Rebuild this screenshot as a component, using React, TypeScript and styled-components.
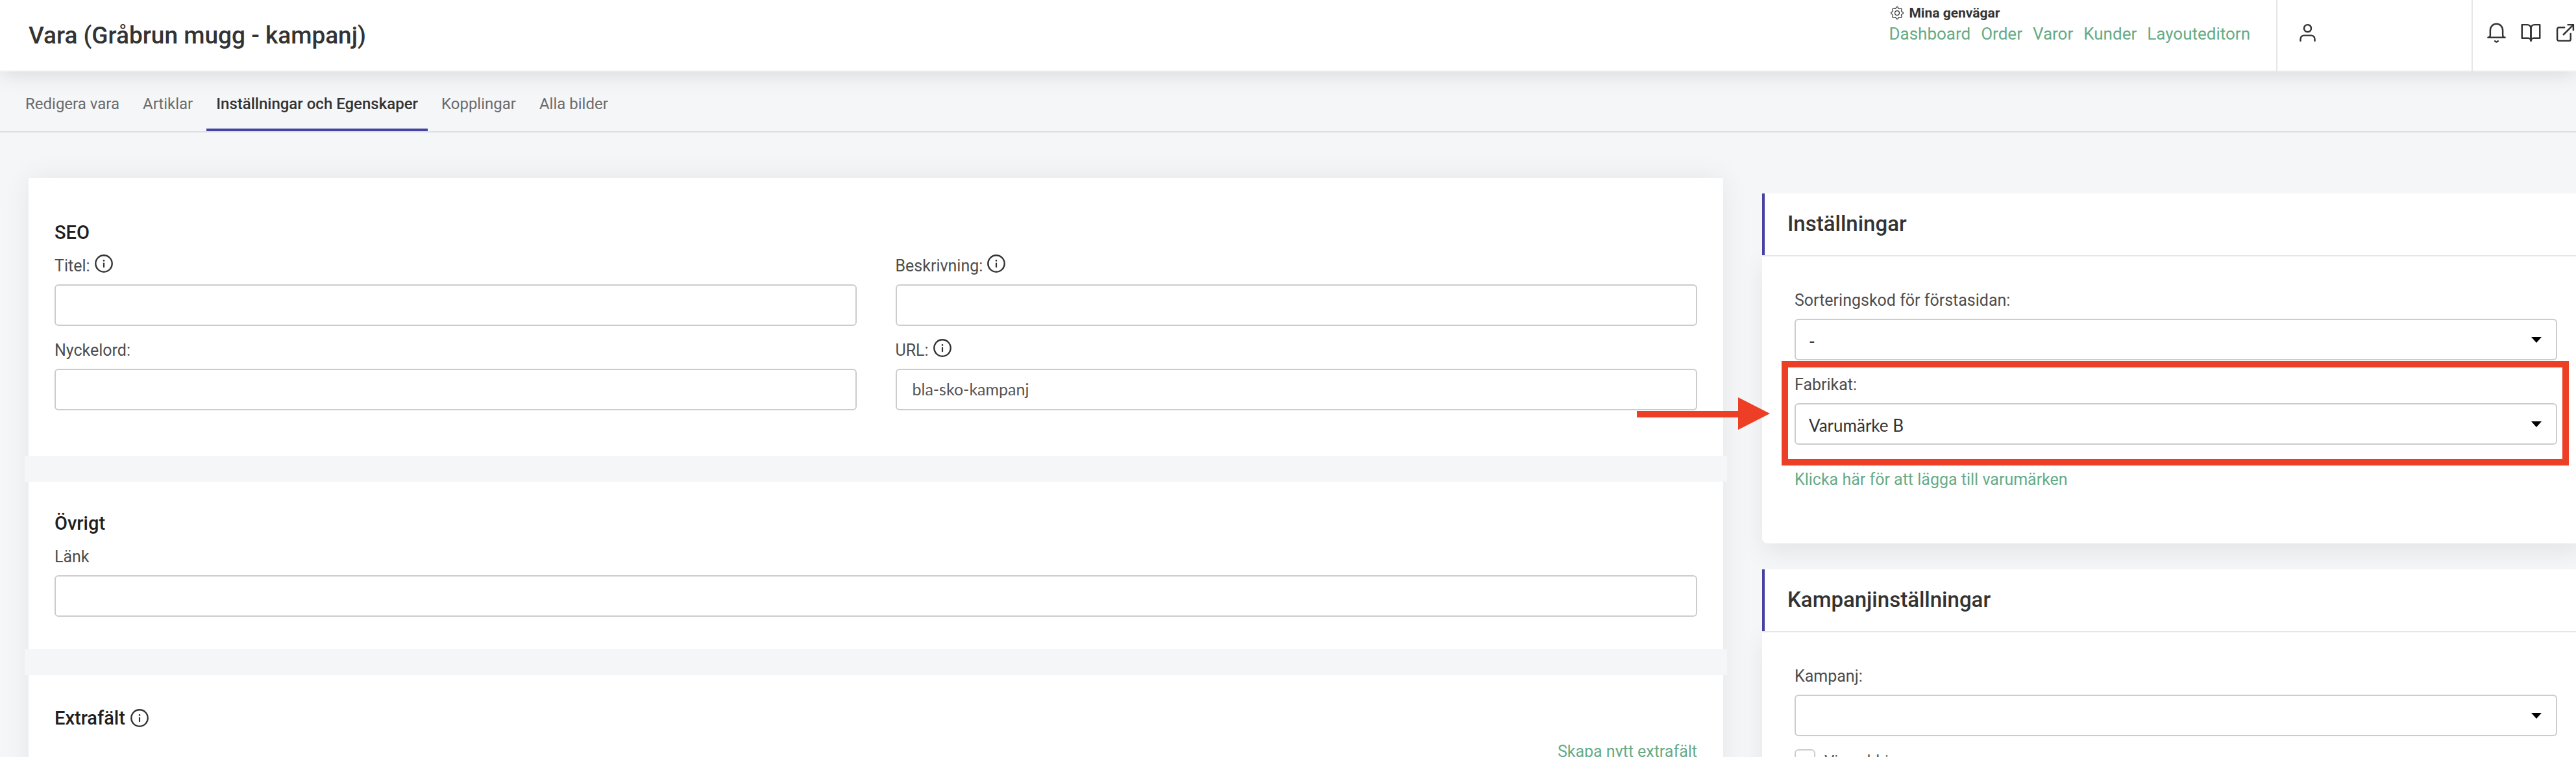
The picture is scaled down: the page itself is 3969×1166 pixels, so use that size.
import React from "react";
import styled, { createGlobalStyle } from "styled-components";
import { BsGear } from "react-icons/bs";

const ink = "#333333";
const green = "#65ab86";
const indigo = "#4643a0";
const canvas = "#f5f6f8";
const marker = "#ec3f26";

const GlobalStyle = createGlobalStyle`
  *, *::before, *::after { box-sizing: border-box; }
  body {
    margin: 0;
    background: ${canvas};
    color: ${ink};
    font-family: Roboto, "Liberation Sans", sans-serif;
    font-size: 25px;
    line-height: 36px;
  }
  html, body { overflow: hidden; }
  a { text-decoration: none; }
`;

const Page = styled.div`
  display: flex;
  flex-direction: column;
  height: 100vh;
  overflow: hidden;
`;

const TopBar = styled.header`
  position: relative;
  z-index: 1;
  flex: none;
  display: flex;
  align-items: stretch;
  height: 110px;
  background: #ffffff;
  border-bottom: 2px solid #f8f8f8;
  box-shadow: 0 4px 30px rgba(0, 0, 0, 0.12);
`;

const PageTitle = styled.h1`
  flex: 1;
  margin: 0;
  padding: 34px 44px;
  font-size: 37px;
  line-height: 42px;
  font-weight: 500;
`;

const Shortcuts = styled.nav`
  padding: 6px 40px 0 0;
`;

const ShortcutsTitle = styled.div`
  display: flex;
  align-items: center;
  gap: 8px;
  padding-left: 3px;
  font-size: 21px;
  line-height: 28px;
  font-weight: 700;
`;

const ShortcutList = styled.div`
  display: flex;
  gap: 16px;
`;

const GreenLink = styled.a<{ $size?: number }>`
  color: ${green};
  font-size: ${(p) => p.$size ?? 25}px;
`;

const UserArea = styled.div`
  display: flex;
  align-items: flex-start;
  width: 301px;
  margin-bottom: -2px;
  padding: 34px 30px;
  border-left: 2px solid #e6e6e6;
`;

const ToolArea = styled.div`
  display: flex;
  align-items: flex-start;
  gap: 20px;
  margin-bottom: -2px;
  padding: 34px 0 0 20px;
  border-left: 2px solid #e6e6e6;
`;

const IconButton = styled.button`
  display: flex;
  padding: 0;
  border: 0;
  background: none;
  color: ${ink};
`;

const Tabs = styled.nav`
  flex: none;
  display: flex;
  gap: 6px;
  height: 94px;
  padding-left: 24px;
  border-bottom: 2px solid #dcdee1;
`;

const Tab = styled.a<{ $active?: boolean }>`
  padding: 32px 15px 0;
  font-size: 24px;
  color: ${(p) => (p.$active ? ink : "#6b6b6b")};
  font-weight: ${(p) => (p.$active ? 500 : 400)};
  border-bottom: 4px solid ${(p) => (p.$active ? indigo : "transparent")};
`;

const Columns = styled.main`
  display: grid;
  grid-template-columns: 2611fr 1264fr;
  gap: 60px;
  align-items: start;
  margin-right: -10px;
  padding: 70px 0 0 44px;
`;

const FormColumn = styled.form`
  background: #ffffff;
  box-shadow: 0 0 40px rgba(0, 0, 0, 0.07);
`;

const Section = styled.section<{ $top?: number; $bottom?: number }>`
  padding: ${(p) => p.$top ?? 44}px 40px ${(p) => p.$bottom ?? 50}px;
`;

const Divider = styled.div`
  height: 40px;
  margin: 0 -6px;
  background: ${canvas};
`;

const SectionTitle = styled.h2`
  display: flex;
  align-items: center;
  gap: 8px;
  margin: 0 0 14px;
  color: #1f1f1f;
  font-size: 29px;
  line-height: 40px;
  font-weight: 500;
`;

const FieldGrid = styled.div`
  display: grid;
  grid-template-columns: 1fr 1fr;
  gap: 20px 60px;
`;

const FieldBox = styled.div`
  position: relative;
  display: flex;
  flex-direction: column;
  gap: 10px;
`;

const FieldLabel = styled.label`
  display: flex;
  align-items: flex-start;
  gap: 7px;
  color: #4d4d4d;
`;

const TextInput = styled.input`
  width: 100%;
  height: 64px;
  padding: 0 24px 2px;
  border: 2px solid #cccccc;
  border-radius: 6px;
  background: #ffffff;
  color: #555555;
  font-family: Lato, "Noto Sans", sans-serif;
  font-size: 25px;
  outline: none;
`;

const SelectFrame = styled.div`
  position: relative;
  &::after {
    content: "";
    position: absolute;
    top: 28px;
    right: 24px;
    border: 8px solid transparent;
    border-top: 9px solid #000000;
    border-bottom: 0;
    pointer-events: none;
  }
`;

const SelectInput = styled.select`
  display: block;
  appearance: none;
  width: 100%;
  height: 64px;
  padding: 4px 60px 0 20px;
  border: 2px solid #cccccc;
  border-radius: 6px;
  background: #ffffff;
  color: ${ink};
  font-family: Lato, "Noto Sans", sans-serif;
  font-size: 26px;
  outline: none;
`;

const EndRow = styled.div`
  display: flex;
  justify-content: flex-end;
`;

const SideColumn = styled.aside`
  display: flex;
  flex-direction: column;
  gap: 40px;
  padding-top: 24px;
`;

const Panel = styled.section`
  position: relative;
`;

const PanelTitle = styled.h2`
  position: relative;
  z-index: 1;
  margin: 0;
  padding: 27px 36px 28px 35px;
  border-left: 4px solid ${indigo};
  background: #ffffff;
  font-size: 33px;
  line-height: 40px;
  font-weight: 500;
`;

const PanelBody = styled.div`
  display: flex;
  flex-direction: column;
  gap: 20px;
  padding: 50px 39px 80px 50px;
  border-top: 2px solid #e6e6e6;
  border-radius: 0 0 8px 8px;
  background: #ffffff;
  box-shadow: 0 14px 36px rgba(0, 0, 0, 0.07);
`;

const PanelLink = styled(GreenLink)`
  margin-top: 16px;
`;

const Highlight = styled.div`
  position: absolute;
  inset: -19px -18px -32px -20px;
  border: 10px solid ${marker};
  pointer-events: none;
`;

const Arrow = styled.svg`
  position: absolute;
  right: 100%;
  top: 46px;
  margin-right: 28px;
`;

const CheckRow = styled.label`
  display: flex;
  align-items: flex-start;
  gap: 14px;
  color: #4d4d4d;
  font-size: 24px;
`;

const CheckBox = styled.input`
  appearance: none;
  width: 32px;
  height: 32px;
  margin: 0;
  border: 2px solid #cccccc;
  border-radius: 6px;
  background: #ffffff;
`;

type StrokeIconProps = { children: React.ReactNode };

const StrokeIcon = ({ children }: StrokeIconProps) => (
  <svg width="33" height="33" viewBox="0 0 24 24" fill="none" stroke="currentColor" strokeWidth="1.8" strokeLinecap="round" strokeLinejoin="round" aria-hidden="true">
    {children}
  </svg>
);

const InfoIcon = () => (
  <svg width="28" height="28" viewBox="0 0 28 28" fill="none" stroke={ink} aria-hidden="true">
    <circle cx="14" cy="14" r="12.7" strokeWidth="2.4" />
    <path d="M14 13.6v5.6" strokeWidth="2.2" strokeLinecap="round" />
    <circle cx="14" cy="9.4" r="1.3" fill={ink} stroke="none" />
  </svg>
);

type FieldProps = { id: string; label: string; info?: boolean; value?: string };

const TextField = ({ id, label, info, value }: FieldProps) => (
  <FieldBox>
    <FieldLabel htmlFor={id}>
      {label}
      {info && <InfoIcon />}
    </FieldLabel>
    <TextInput id={id} type="text" defaultValue={value} />
  </FieldBox>
);

type SelectFieldProps = { id: string; label: string; option: string; children?: React.ReactNode };

const SelectField = ({ id, label, option, children }: SelectFieldProps) => (
  <FieldBox>
    <FieldLabel htmlFor={id}>{label}</FieldLabel>
    <SelectFrame>
      <SelectInput id={id}>
        <option>{option}</option>
      </SelectInput>
    </SelectFrame>
    {children}
  </FieldBox>
);

const shortcuts = ["Dashboard", "Order", "Varor", "Kunder", "Layouteditorn"];
const tabs = ["Redigera vara", "Artiklar", "Inställningar och Egenskaper", "Kopplingar", "Alla bilder"];

export default function App() {
  return (
    <Page>
      <GlobalStyle />
      <TopBar>
        <PageTitle>Vara (Gråbrun mugg - kampanj)</PageTitle>
        <Shortcuts>
          <ShortcutsTitle>
            <BsGear size={20} />
            Mina genvägar
          </ShortcutsTitle>
          <ShortcutList>
            {shortcuts.map((name) => (
              <GreenLink key={name} href="#" $size={26}>
                {name}
              </GreenLink>
            ))}
          </ShortcutList>
        </Shortcuts>
        <UserArea>
          <IconButton type="button" aria-label="Konto">
            <StrokeIcon>
              <path d="M20 21v-2a4 4 0 0 0-4-4H8a4 4 0 0 0-4 4v2" />
              <circle cx="12" cy="7" r="4" />
            </StrokeIcon>
          </IconButton>
        </UserArea>
        <ToolArea>
          <IconButton type="button" aria-label="Aviseringar">
            <StrokeIcon>
              <path d="M2.5 17.3h19" />
              <path d="M3.2 17.3C4.6 16.9 5 15.8 5 14.6V9a7 7 0 0 1 14 0v5.6c0 1.2.4 2.3 1.8 2.7" />
              <path d="M10.3 21.3c.8 1.2 2.6 1.2 3.4 0" />
            </StrokeIcon>
          </IconButton>
          <IconButton type="button" aria-label="Manual">
            <StrokeIcon>
              <path d="M2 3h6a4 4 0 0 1 4 4v14a3 3 0 0 0-3-3H2z" />
              <path d="M22 3h-6a4 4 0 0 0-4 4v14a3 3 0 0 1 3-3h7z" />
            </StrokeIcon>
          </IconButton>
          <IconButton type="button" aria-label="Öppna butiken">
            <StrokeIcon>
              <path d="M18 13v6a2 2 0 0 1-2 2H5a2 2 0 0 1-2-2V8a2 2 0 0 1 2-2h6" />
              <path d="M15 3h6v6" />
              <path d="M10 14L21 3" />
            </StrokeIcon>
          </IconButton>
        </ToolArea>
      </TopBar>
      <Tabs>
        {tabs.map((name, i) => (
          <Tab key={name} href="#" $active={i === 2}>
            {name}
          </Tab>
        ))}
      </Tabs>
      <Columns>
        <FormColumn>
          <Section $top={64} $bottom={70}>
            <SectionTitle>SEO</SectionTitle>
            <FieldGrid>
              <TextField id="title" label="Titel:" info />
              <TextField id="description" label="Beskrivning:" info />
              <TextField id="keywords" label="Nyckelord:" />
              <TextField id="url" label="URL:" info value="bla-sko-kampanj" />
            </FieldGrid>
          </Section>
          <Divider />
          <Section>
            <SectionTitle>Övrigt</SectionTitle>
            <TextField id="link" label="Länk" />
          </Section>
          <Divider />
          <Section $top={46}>
            <SectionTitle>
              Extrafält
              <InfoIcon />
            </SectionTitle>
            <EndRow>
              <GreenLink href="#">Skapa nytt extrafält</GreenLink>
            </EndRow>
          </Section>
        </FormColumn>
        <SideColumn>
          <Panel>
            <PanelTitle>Inställningar</PanelTitle>
            <PanelBody>
              <SelectField id="sort" label="Sorteringskod för förstasidan:" option="-" />
              <SelectField id="brand" label="Fabrikat:" option="Varumärke B">
                <Highlight>
                  <Arrow width="205" height="50" viewBox="0 0 205 50" aria-hidden="true">
                    <path d="M0 21H156V0L205 25L156 50V31H0Z" fill={marker} />
                  </Arrow>
                </Highlight>
              </SelectField>
              <PanelLink href="#">Klicka här för att lägga till varumärken</PanelLink>
            </PanelBody>
          </Panel>
          <Panel>
            <PanelTitle>Kampanjinställningar</PanelTitle>
            <PanelBody>
              <SelectField id="campaign" label="Kampanj:" option="" />
              <CheckRow>
                <CheckBox type="checkbox" />
                Visa aldrig
              </CheckRow>
            </PanelBody>
          </Panel>
        </SideColumn>
      </Columns>
    </Page>
  );
}
